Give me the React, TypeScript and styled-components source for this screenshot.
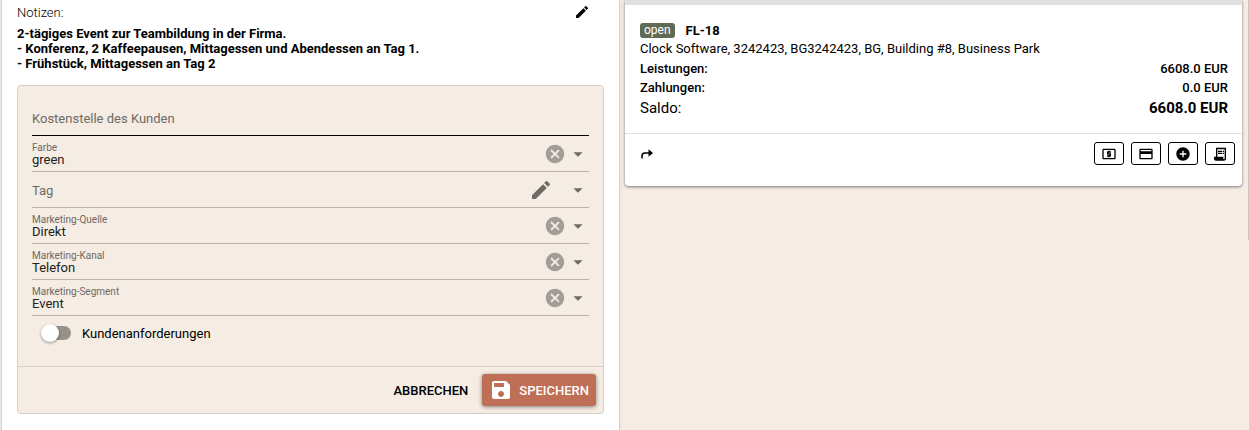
import React from "react";
import styled, { createGlobalStyle, css } from "styled-components";
import {
  MdAddCircle,
  MdArrowDropDown,
  MdCancel,
  MdCreditCard,
  MdEdit,
  MdLocalAtm,
  MdReceiptLong,
  MdSave,
} from "react-icons/md";

const GlobalStyle = createGlobalStyle`
  *, *::before, *::after { box-sizing: border-box; }
  body {
    margin: 0;
    background: #f5ece3;
    color: #000;
    font: 400 13px/15px Roboto, "Liberation Sans", sans-serif;
  }
  button, input, select { font: inherit; color: inherit; }
  svg { display: block; flex: none; }
`;

const Page = styled.main`
  display: grid;
  grid-template-columns: 1fr 1fr 1px;
  column-gap: 6px;
  align-items: start;
  min-height: 100vh;
  padding-left: 2px;
`;

const Panel = styled.section`
  align-self: stretch;
  padding: 4px 15px 16px;
  background: #fff;
  box-shadow: 0 0 0 1px #ddd1c8, 0 1px 3px 1px rgba(0, 0, 0, 0.08);
`;

const NotesHeader = styled.header`
  display: flex;
  align-items: center;
  justify-content: space-between;
  height: 16px;
  margin-bottom: 6px;
  font-weight: 300;
`;

const IconButton = styled.button<{ $tone?: string }>`
  display: flex;
  padding: 0;
  border: 0;
  background: none;
  color: ${(p) => p.$tone ?? "#000"};
  cursor: pointer;
`;

const NotesEdit = styled(IconButton)`
  margin-right: 14px;
`;

const Notes = styled.p`
  margin: 0 0 14px;
  font-weight: 700;
  white-space: pre-line;
`;

const Form = styled.form`
  border: 1px solid #d8cdc5;
  border-radius: 4px;
  background: #f5ece3;
`;

const FormBody = styled.div`
  padding: 14px 14px 16px;
`;

const Field = styled.div<{ $active?: boolean }>`
  display: flex;
  align-items: center;
  height: 36px;
  border-bottom: 1px solid ${(p) => (p.$active ? "#000" : "#bab1aa")};
`;

const FieldText = styled.div`
  display: flex;
  flex: 1;
  flex-direction: column;
  padding-top: 2px;
`;

const plainControl = css`
  width: 100%;
  padding: 0;
  border: 0;
  outline: 0;
  background: none;
  appearance: none;
`;

const TextInput = styled.input`
  ${plainControl}
  height: 20px;
  &::placeholder { color: #6e6a66; opacity: 1; }
`;

const FieldLabel = styled.label`
  color: #6e6a66;
  font-size: 10px;
  line-height: 10px;
`;

const Select = styled.select<{ $empty?: boolean }>`
  ${plainControl}
  height: 14px;
  line-height: 14px;
  color: ${(p) => (p.$empty ? "#6e6a66" : "#212121")};
`;

const FieldActions = styled.div<{ $wide?: boolean }>`
  display: flex;
  align-items: center;
  gap: ${(p) => (p.$wide ? 14 : 1)}px;
  color: #6e6a66;
`;

const ToggleRow = styled.label`
  display: flex;
  align-items: center;
  gap: 11px;
  height: 34px;
  padding-left: 10px;
`;

const Toggle = styled.input.attrs({ type: "checkbox" })`
  display: flex;
  align-items: center;
  width: 29px;
  height: 14px;
  margin: 0;
  border-radius: 7px;
  background: #97918b;
  appearance: none;
  &::before {
    content: "";
    width: 18px;
    height: 18px;
    flex: none;
    margin-left: -1px;
    border-radius: 50%;
    background: #fff;
    box-shadow: 0 1px 3px rgba(0, 0, 0, 0.4);
  }
  &:checked { justify-content: flex-end; }
`;

const FormFooter = styled.footer`
  display: flex;
  justify-content: flex-end;
  padding: 7px;
  border-top: 1px solid #d8cdc5;
`;

const Button = styled.button<{ $primary?: boolean }>`
  display: flex;
  align-items: center;
  gap: 6px;
  height: 32px;
  padding: 0 ${(p) => (p.$primary ? 7 : 14)}px;
  border: 0;
  border-radius: 3px;
  background: ${(p) => (p.$primary ? "#bf6f55" : "none")};
  color: ${(p) => (p.$primary ? "#fff" : "#000")};
  box-shadow: ${(p) => (p.$primary ? "0 1px 4px rgba(0, 0, 0, 0.45)" : "none")};
  font-weight: 500;
  text-transform: uppercase;
  cursor: pointer;
`;

const FolioCard = styled.article`
  border-top: 5px solid #e0e0e0;
  border-radius: 0 0 4px 4px;
  background: #fff;
  box-shadow: 0 1px 3px rgba(0, 0, 0, 0.5);
`;

const FolioBody = styled.div`
  padding: 16px 14px 14px 15px;
`;

const FolioTitle = styled.h2`
  display: flex;
  align-items: center;
  gap: 11px;
  height: 18px;
  margin: 0;
  font-size: 13px;
  font-weight: 700;
`;

const Badge = styled.span`
  padding: 0 4px;
  border-radius: 3px;
  background: #5f6b54;
  color: #fff;
  font-size: 12px;
  font-weight: 400;
`;

const Address = styled.p`
  margin: 0;
  line-height: 20px;
`;

const Totals = styled.dl`
  margin: 0;
`;

const TotalRow = styled.div<{ $balance?: boolean }>`
  display: flex;
  justify-content: space-between;
  font-size: ${(p) => (p.$balance ? 15 : 13)}px;
  line-height: ${(p) => (p.$balance ? 22 : 19)}px;
  dt { font-weight: ${(p) => (p.$balance ? 400 : 500)}; }
  dd { margin: 0; font-weight: ${(p) => (p.$balance ? 700 : 500)}; }
`;

const FolioFooter = styled.footer`
  display: flex;
  align-items: center;
  justify-content: space-between;
  padding: 8px 7px 21px 15px;
  border-top: 1px solid #e0e0e0;
`;

const FolioActions = styled.div`
  display: flex;
  gap: 7px;
`;

const OutlineButton = styled.button`
  display: flex;
  align-items: center;
  justify-content: center;
  width: 30px;
  height: 23px;
  padding: 0;
  border: 1px solid #000;
  border-radius: 3px;
  background: #fff;
  cursor: pointer;
`;

const NextColumn = styled.div`
  height: 240px;
  background: #cdc3bb;
`;

const ForwardArrow = () => (
  <svg width="14" height="14" viewBox="0 0 14 14" aria-hidden="true">
    <path d="M2 11.5V9Q2 6 5 6H9" fill="none" stroke="#000" strokeWidth="1.5" />
    <path d="M8.5 2.2L13 6L8.5 9.8Z" fill="#000" />
  </svg>
);

interface SelectFieldProps {
  id: string;
  label: string;
  value?: string;
}

function SelectField({ id, label, value }: SelectFieldProps) {
  return (
    <Field>
      <FieldText>
        {value && <FieldLabel htmlFor={id}>{label}</FieldLabel>}
        <Select id={id} $empty={!value} aria-label={value ? undefined : label}>
          <option>{value ?? label}</option>
        </Select>
      </FieldText>
      <FieldActions $wide={!value}>
        {value ? (
          <IconButton type="button" $tone="#a39d97" aria-label={`${label} löschen`}>
            <MdCancel size={22} />
          </IconButton>
        ) : (
          <IconButton type="button" $tone="#6e6a66" aria-label={`${label} bearbeiten`}>
            <MdEdit size={24} />
          </IconButton>
        )}
        <MdArrowDropDown size={22} />
      </FieldActions>
    </Field>
  );
}

const selects: SelectFieldProps[] = [
  { id: "color", label: "Farbe", value: "green" },
  { id: "tag", label: "Tag" },
  { id: "source", label: "Marketing-Quelle", value: "Direkt" },
  { id: "channel", label: "Marketing-Kanal", value: "Telefon" },
  { id: "segment", label: "Marketing-Segment", value: "Event" },
];

const notes = `2-tägiges Event zur Teambildung in der Firma.
- Konferenz, 2 Kaffeepausen, Mittagessen und Abendessen an Tag 1.
- Frühstück, Mittagessen an Tag 2`;

export default function App() {
  return (
    <>
      <GlobalStyle />
      <Page>
        <Panel>
          <NotesHeader>
            <span>Notizen:</span>
            <NotesEdit type="button" aria-label="Notizen bearbeiten">
              <MdEdit size={16} />
            </NotesEdit>
          </NotesHeader>
          <Notes>{notes}</Notes>
          <Form onSubmit={(e) => e.preventDefault()}>
            <FormBody>
              <Field $active>
                <FieldText>
                  <TextInput
                    type="text"
                    placeholder="Kostenstelle des Kunden"
                    aria-label="Kostenstelle des Kunden"
                  />
                </FieldText>
              </Field>
              {selects.map((field) => (
                <SelectField key={field.id} {...field} />
              ))}
              <ToggleRow>
                <Toggle />
                Kundenanforderungen
              </ToggleRow>
            </FormBody>
            <FormFooter>
              <Button type="button">Abbrechen</Button>
              <Button type="submit" $primary>
                <MdSave size={24} />
                Speichern
              </Button>
            </FormFooter>
          </Form>
        </Panel>

        <FolioCard>
          <FolioBody>
            <FolioTitle>
              <Badge>open</Badge>
              FL-18
            </FolioTitle>
            <Address>
              Clock Software, 3242423, BG3242423, BG, Building #8, Business Park
            </Address>
            <Totals>
              <TotalRow>
                <dt>Leistungen:</dt>
                <dd>6608.0 EUR</dd>
              </TotalRow>
              <TotalRow>
                <dt>Zahlungen:</dt>
                <dd>0.0 EUR</dd>
              </TotalRow>
              <TotalRow $balance>
                <dt>Saldo:</dt>
                <dd>6608.0 EUR</dd>
              </TotalRow>
            </Totals>
          </FolioBody>
          <FolioFooter>
            <IconButton type="button" aria-label="Weiterleiten">
              <ForwardArrow />
            </IconButton>
            <FolioActions>
              <OutlineButton type="button" aria-label="Barzahlung">
                <MdLocalAtm size={16} />
              </OutlineButton>
              <OutlineButton type="button" aria-label="Kartenzahlung">
                <MdCreditCard size={16} />
              </OutlineButton>
              <OutlineButton type="button" aria-label="Hinzufügen">
                <MdAddCircle size={16} />
              </OutlineButton>
              <OutlineButton type="button" aria-label="Rechnung">
                <MdReceiptLong size={16} />
              </OutlineButton>
            </FolioActions>
          </FolioFooter>
        </FolioCard>
        <NextColumn />
      </Page>
    </>
  );
}
